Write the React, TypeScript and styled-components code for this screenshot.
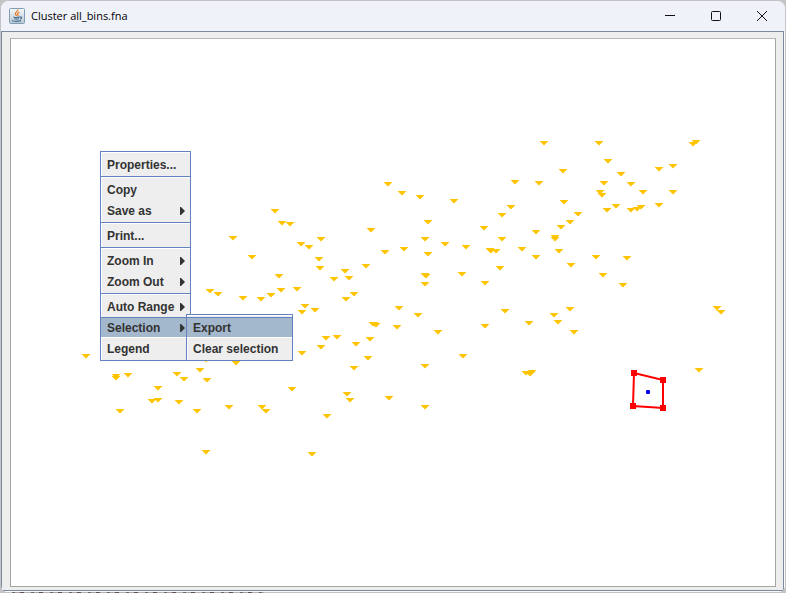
import React from "react";
import styled, { createGlobalStyle, css } from "styled-components";

const GlobalStyle = createGlobalStyle`
  *, *::before, *::after { box-sizing: border-box; }
  html, body, #root { height: 100%; margin: 0; }
  body {
    background: #c9c9cb;
    font-family: "Liberation Sans", Arial, sans-serif;
    overflow: hidden;
  }
`;

const Desktop = styled.div`
  height: 100vh;
  padding: 1px;
  background:
    repeating-linear-gradient(90deg, #6a6670 0 3px, #aaa3a0 3px 8px, #5d5054 8px 12px, #b5b0ae 12px 19px)
      12px 100% / 252px 1px no-repeat,
    #c4c4c6;
`;

const Frame = styled.main`
  display: flex;
  flex-direction: column;
  height: 100%;
  border-radius: 8px 8px 6px 6px;
  background: #fafafc;
  overflow: hidden;
`;

const TitleBar = styled.header`
  display: flex;
  align-items: center;
  flex: none;
  height: 30px;
  padding-left: 8px;
  background: #f0f2fa;
`;

const Title = styled.h1`
  flex: 1;
  margin: 0 0 0 6px;
  font: 400 11px/16px "Open Sans", "Noto Sans", sans-serif;
  color: #000;
`;

const WindowButton = styled.button`
  display: grid;
  place-items: center;
  width: 46px;
  height: 28px;
  padding: 0;
  border: 0;
  background: transparent;
`;

const Content = styled.section`
  flex: 1;
  display: flex;
  min-height: 0;
  margin: 0 1px 1px 0;
  padding: 6px 7px 3px 8px;
  border: 1px solid #7b8a9e;
  background: #eeeeee;
`;

const Plot = styled.div`
  position: relative;
  flex: 1;
  border: 1px solid #a5a5a5;
  border-top-color: #b8b8b8;
  background: #fff;
`;

const Chart = styled.svg`
  display: block;
  width: 100%;
  height: 100%;
`;

const panel = css`
  position: absolute;
  border: 1px solid #6382bf;
  background: #eeeeee;
  box-shadow: inset 1px 1px 0 #fff;
`;

const Menu = styled.div`
  ${panel}
  top: 112px;
  left: 89px;
  width: 91px;
  padding: 2px 0 1px;
`;

const SubMenu = styled.div`
  ${panel}
  top: -3px;
  left: 85px;
  width: 107px;
  padding: 2px 0 1px;
`;

const SubMenuAnchor = styled.div`
  position: relative;
`;

const MenuItem = styled.button<{ $active?: boolean }>`
  display: flex;
  align-items: center;
  justify-content: space-between;
  width: 100%;
  height: 21px;
  padding: 0 5px 0 6px;
  border: 0;
  border-top: 1px solid transparent;
  border-bottom: 1px solid transparent;
  background: transparent;
  color: #333;
  font: 700 12px/16px "Liberation Sans", Arial, sans-serif;
  text-align: left;
  white-space: nowrap;
  ${({ $active }) =>
    $active &&
    css`
      border-top-color: #6382bf;
      border-bottom-color: #fff;
      background: #a3b8cc;
    `}
`;

const Separator = styled.hr`
  height: 2px;
  margin: 1px 0;
  border: 0;
  border-top: 1px solid #6382bf;
  background: #fff;
`;

const Arrow = () => (
  <svg width="5" height="8" viewBox="0 0 5 8" aria-hidden="true">
    <path d="M0 0H1L5 4L1 8H0Z" fill="#333" />
  </svg>
);

const JavaIcon = () => (
  <svg width="16" height="16" viewBox="0 0 16 16" aria-hidden="true">
    <defs>
      <linearGradient id="tile" x2="0" y2="1">
        <stop stopColor="#f5f8fa" />
        <stop offset="1" stopColor="#b9c8d3" />
      </linearGradient>
    </defs>
    <rect x=".5" y=".5" width="15" height="15" rx="1" fill="url(#tile)" stroke="#829cb0" />
    <path d="M8.8 1.5C9.5 3.5 5.5 4.3 6.4 6.2L7.6 8M10.6 4.2C8.4 5 8 5.9 9 6.8C9.3 7.3 9 7.7 8.7 8" fill="none" stroke="#e8791f" strokeWidth="1.2" />
    <path d="M4.4 8.9C6 9.7 9.2 9.5 10.8 8.8M5.3 10.8C7 11.4 8.8 11.3 10 10.8M11.1 9C13.2 8.4 13 10.6 11 11M3.6 12.2C2.2 13.2 7.5 14 12 12.6" fill="none" stroke="#496f91" strokeWidth="1.1" />
  </svg>
);

/* Marker positions: horizontal centre and top edge of each triangle. */
const points: [number, number][] = [
  [388, 182], [402, 191], [420, 195], [454, 199], [275, 209], [282, 221], [290, 222], [371, 228],
  [428, 220], [233, 236], [301, 242], [309, 245], [321, 237], [425, 237], [445, 242], [252, 255],
  [319, 257], [385, 250], [404, 247], [428, 252], [320, 266], [334, 277], [345, 269], [349, 276],
  [366, 264], [279, 274], [425, 273], [426, 274], [425, 282], [210, 289], [218, 292], [243, 296],
  [261, 297], [271, 293], [281, 288], [297, 287], [346, 297], [354, 292], [305, 304], [302, 310],
  [315, 308], [399, 306], [418, 313], [373, 322], [374, 322], [376, 323], [397, 325], [438, 330],
  [485, 324], [326, 336], [337, 335], [321, 345], [370, 337], [356, 342], [302, 351], [368, 356],
  [354, 366], [425, 364], [463, 354], [292, 387], [347, 392], [350, 398], [389, 396], [425, 405],
  [327, 414], [86, 354], [116, 374], [116, 376], [128, 373], [177, 372], [184, 377], [200, 368],
  [207, 378], [236, 361], [206, 358], [158, 386], [152, 399], [158, 398], [179, 400], [120, 409],
  [197, 409], [229, 405], [262, 405], [266, 409], [206, 450], [312, 452], [544, 141], [599, 141],
  [608, 159], [563, 169], [515, 180], [539, 181], [604, 181], [600, 190], [602, 193], [511, 205],
  [564, 200], [607, 208], [502, 213], [578, 212], [570, 220], [484, 226], [561, 225], [536, 230],
  [502, 237], [555, 235], [555, 237], [466, 245], [490, 248], [491, 249], [496, 249], [522, 247],
  [536, 255], [559, 249], [596, 255], [571, 263], [500, 266], [462, 272], [603, 273], [485, 281],
  [696, 140], [693, 142], [621, 172], [659, 167], [673, 164], [631, 182], [643, 190], [673, 190],
  [616, 204], [659, 203], [631, 208], [637, 207], [641, 205], [627, 256], [623, 283], [505, 309],
  [570, 307], [554, 313], [558, 320], [529, 321], [574, 330], [526, 371], [530, 372], [532, 370],
  [717, 306], [721, 310], [699, 368],
];

const corners: [number, number][] = [[634, 373], [663, 380], [663, 408], [633, 406]];

export default function App() {
  return (
    <>
      <GlobalStyle />
      <Desktop>
        <Frame>
          <TitleBar>
            <JavaIcon />
            <Title>Cluster all_bins.fna</Title>
            <WindowButton aria-label="Minimize">
              <svg width="10" height="10" viewBox="0 0 10 10"><path d="M0 4.5H10" stroke="#111" /></svg>
            </WindowButton>
            <WindowButton aria-label="Maximize">
              <svg width="10" height="10" viewBox="0 0 10 10"><rect x=".5" y=".5" width="9" height="9" rx="1" fill="none" stroke="#111" /></svg>
            </WindowButton>
            <WindowButton aria-label="Close">
              <svg width="10" height="10" viewBox="0 0 10 10"><path d="M0 0L10 10M10 0L0 10" stroke="#111" /></svg>
            </WindowButton>
          </TitleBar>
          <Content>
            <Plot>
              <Chart viewBox="11 39 764 547" preserveAspectRatio="xMinYMin meet" role="img" aria-label="Cluster scatter plot">
                {points.map(([x, y]) => (
                  <path key={`${x}-${y}`} d={`M${x - 4.5} ${y}H${x + 4.5}L${x} ${y + 4.5}Z`} fill="#ffc400" />
                ))}
                <path d={`M${corners.map((c) => c.join(" ")).join("L")}Z`} fill="none" stroke="#f00" strokeWidth="2" />
                {corners.map(([x, y]) => (
                  <rect key={`${x}-${y}`} x={x - 3} y={y - 3} width="6" height="6" fill="#f00" />
                ))}
                <rect x="646" y="390" width="4" height="4" rx="1" fill="#00f" />
              </Chart>
              <Menu role="menu">
                <MenuItem role="menuitem">Properties...</MenuItem>
                <Separator />
                <MenuItem role="menuitem">Copy</MenuItem>
                <MenuItem role="menuitem">Save as<Arrow /></MenuItem>
                <Separator />
                <MenuItem role="menuitem">Print...</MenuItem>
                <Separator />
                <MenuItem role="menuitem">Zoom In<Arrow /></MenuItem>
                <MenuItem role="menuitem">Zoom Out<Arrow /></MenuItem>
                <Separator />
                <MenuItem role="menuitem">Auto Range<Arrow /></MenuItem>
                <SubMenuAnchor>
                  <MenuItem role="menuitem" aria-expanded="true" $active>Selection<Arrow /></MenuItem>
                  <SubMenu role="menu">
                    <MenuItem role="menuitem" $active>Export</MenuItem>
                    <MenuItem role="menuitem">Clear selection</MenuItem>
                  </SubMenu>
                </SubMenuAnchor>
                <MenuItem role="menuitem">Legend</MenuItem>
              </Menu>
            </Plot>
          </Content>
        </Frame>
      </Desktop>
    </>
  );
}
